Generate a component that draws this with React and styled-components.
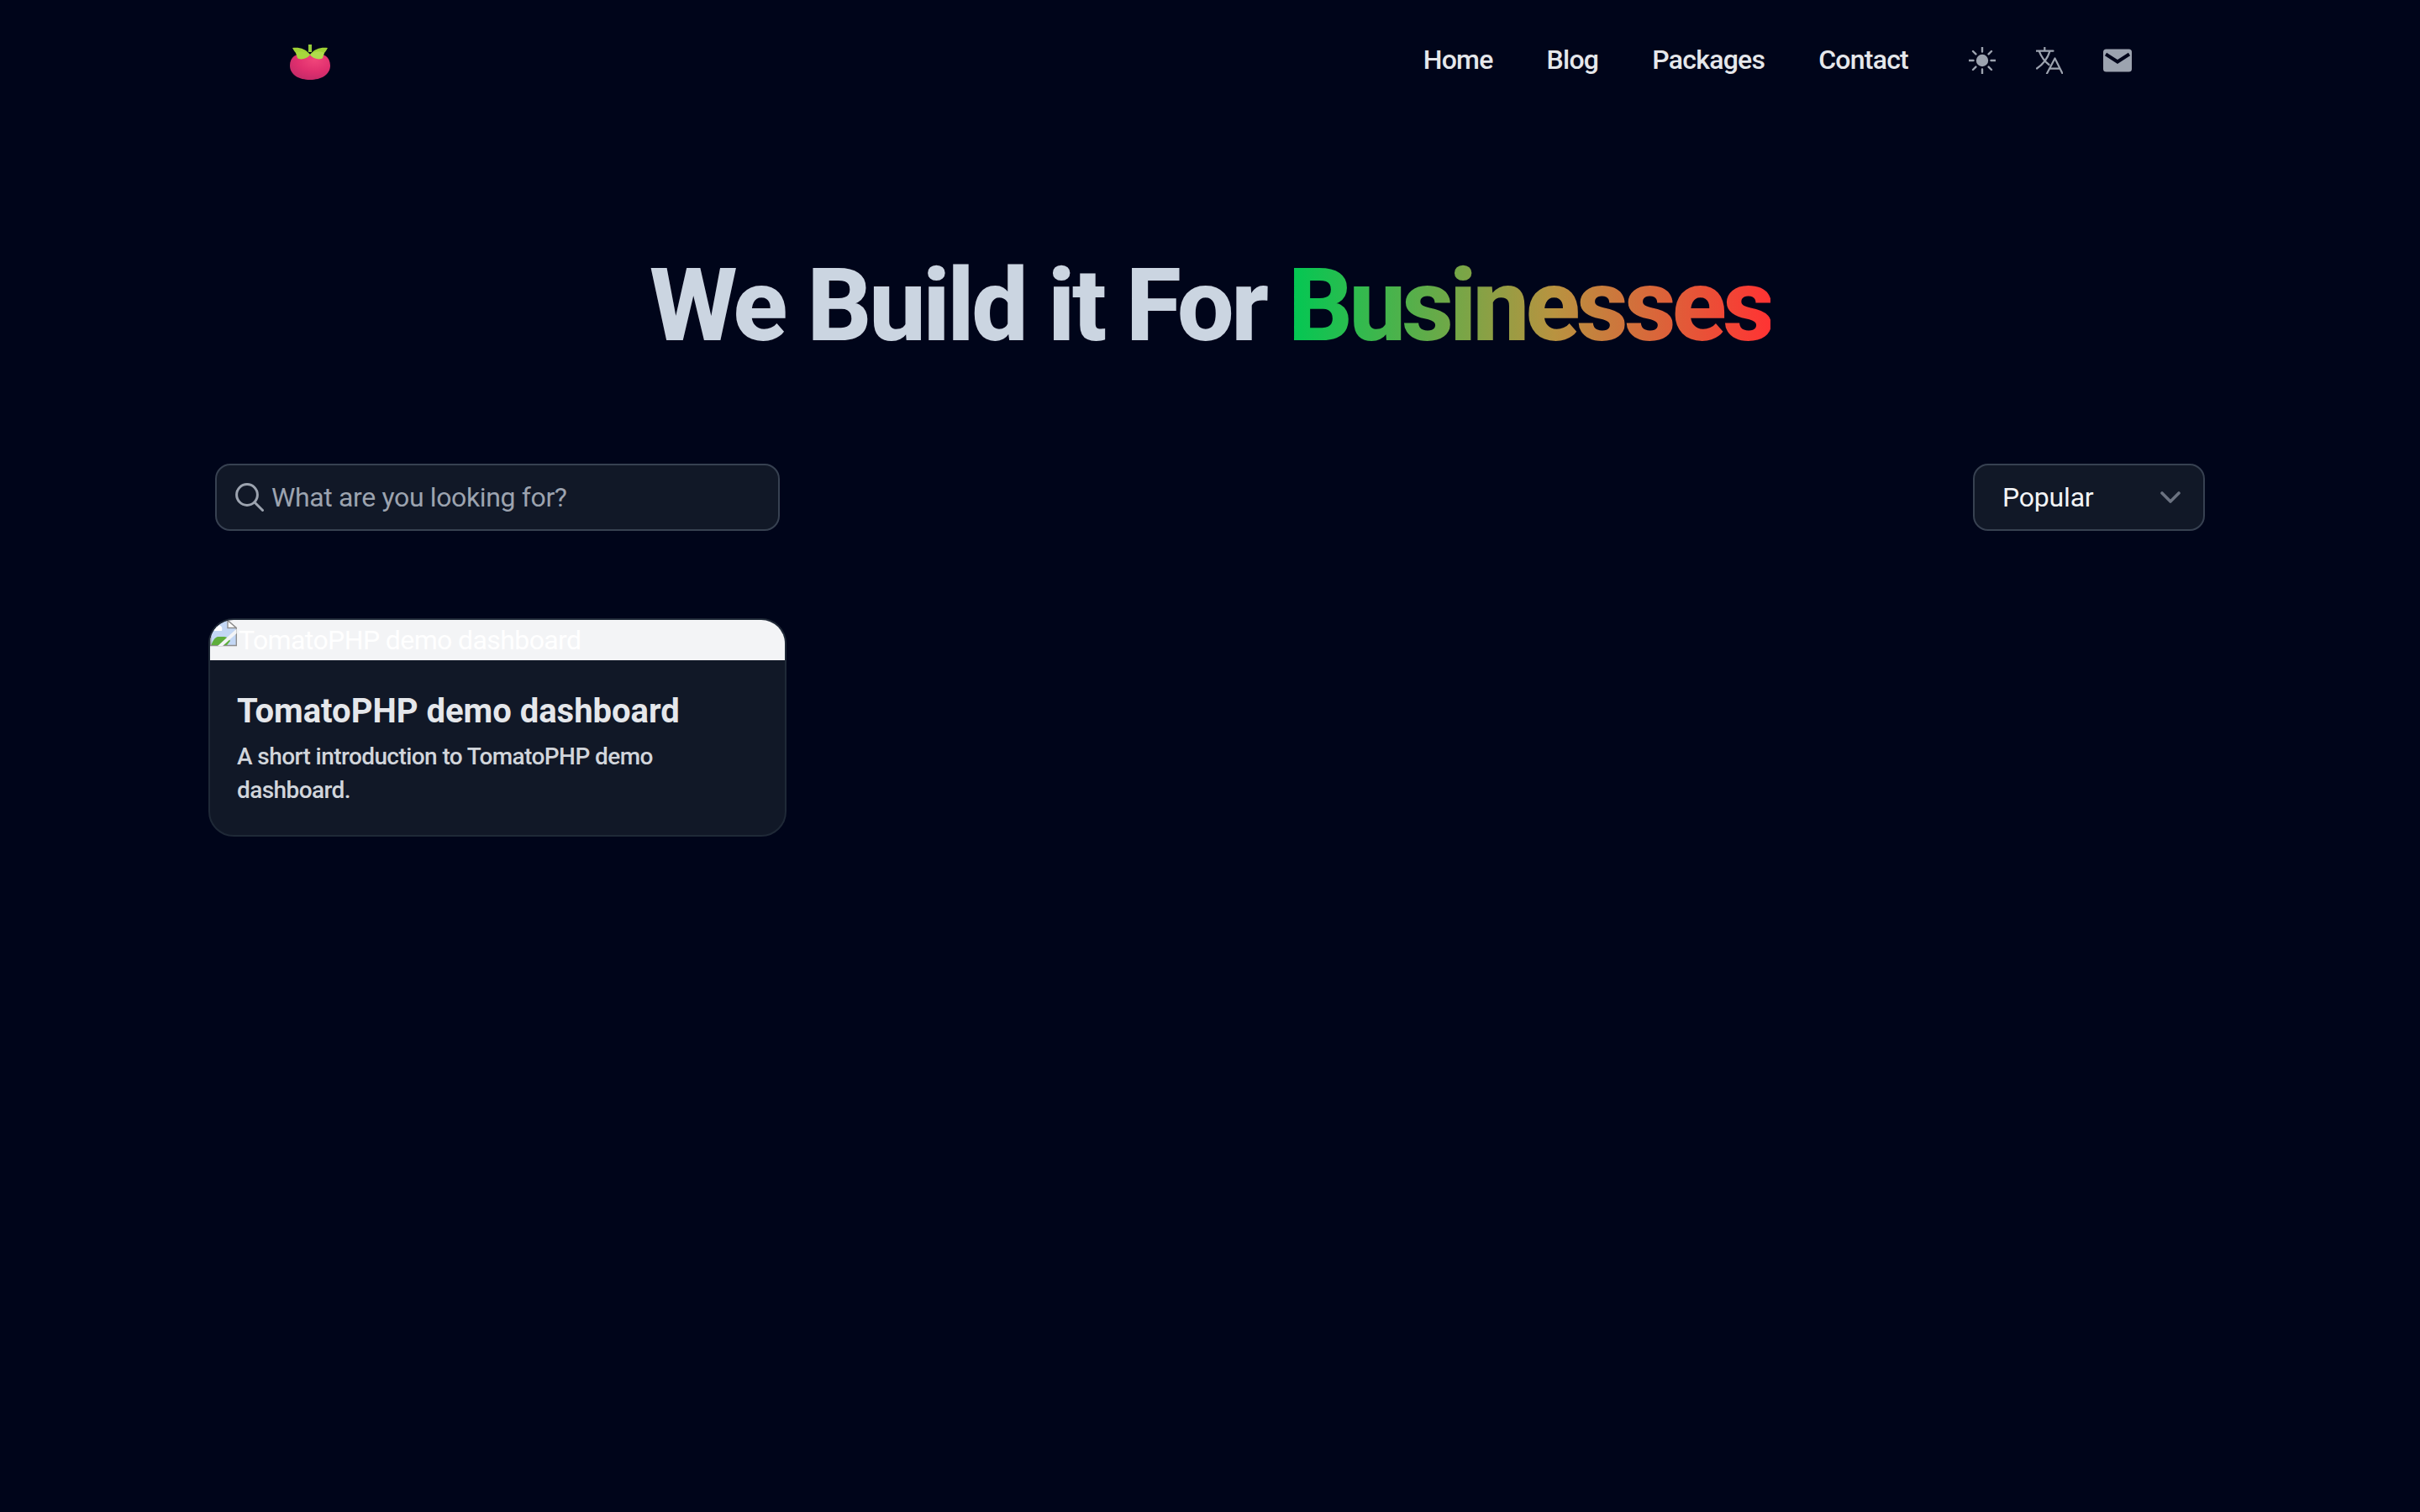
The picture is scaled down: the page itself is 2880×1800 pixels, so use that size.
import React from 'react';
import styled, { createGlobalStyle } from 'styled-components';

const GlobalStyle = createGlobalStyle`
    * { box-sizing: border-box; }
    html, body { margin: 0; padding: 0; background: #00051a; }
    body { font-family: "Roboto", "Noto Sans", "Liberation Sans", sans-serif; }
`

const Page = styled.div`
    min-height: 1800px;
    background-color: #00051a;
    color: #e5e7eb;
`

const Header = styled.header`
    height: 144px;
    padding: 0 343px 0 345px;
    display: flex;
    align-items: center;
    justify-content: space-between;
`

const LogoLink = styled.a`
    display: block;
    width: 48px; height: 42px;
    margin-top: 4px;
`

const HeaderRight = styled.div`
    display: flex;
    align-items: center;
    gap: 72px;
`

const Nav = styled.nav`
    display: flex;
    align-items: center;
    gap: 64px;
    margin-top: -2px;
`

const NavLink = styled.a`
    font-size: 32px; line-height: 48px;
    font-weight: 500;
    color: #e5e7eb;
    letter-spacing: -0.75px;
`

const IconRow = styled.div`
    display: flex;
    align-items: center;
    gap: 48px;
`

const IconButton = styled.button`
    display: block;
    width: ${(props) => props.$width || 32}px; height: 32px;
    padding: 0;
    border: 0;
    background: none;
    color: #9ca3af;

    svg { display: block; }
`

const Hero = styled.section`
    padding-top: 160px;
    padding-bottom: 128px;
    text-align: center;
`

const Title = styled.h1`
    margin: 0;
    font-size: 120px; line-height: 120px;
    font-weight: 800;
    letter-spacing: -3.4px;
    color: #cbd5e1;
`

const Gradient = styled.span`
    background: linear-gradient(to right, #00c853, #b89340 55%, #ff3333);
    -webkit-background-clip: text;
    background-clip: text;
    color: transparent;
    letter-spacing: -4.7px;
`

const Toolbar = styled.div`
    padding: 0 256px;
    display: flex;
    align-items: center;
    justify-content: space-between;
`

const SearchBox = styled.label`
    width: 672px; height: 80px;
    padding: 0 22px;
    display: flex;
    align-items: center;
    gap: 9px;
    background-color: #111827;
    border: 2px solid #374151;
    border-radius: 18px;
    color: #9ca3af;
`

const SearchInput = styled.input`
    flex: 1;
    min-width: 0;
    padding: 0;
    border: 0;
    outline: 0;
    background: none;
    font-family: inherit;
    font-size: 32px;
    letter-spacing: -0.36px;
    color: #f3f4f6;

    &::placeholder { color: #9ca3af; opacity: 1; }
`

const SortSelect = styled.div`
    width: 276px; height: 80px;
    padding: 0 27px 0 33px;
    display: flex;
    align-items: center;
    justify-content: space-between;
    background-color: #111827;
    border: 2px solid #374151;
    border-radius: 18px;
    font-size: 32px;
    letter-spacing: -0.2px;
    color: #f3f4f6;
`

const Grid = styled.div`
    padding: 104px 0 0 248px;
    display: grid;
    grid-template-columns: 688px;
`

const Card = styled.article`
    border: 2px solid #1f2937;
    border-radius: 30px;
    background-color: #111827;
    overflow: hidden;
`

const BrokenImage = styled.div`
    height: 48px;
    display: flex;
    align-items: flex-start;
    gap: 2px;
    background-color: #f3f4f6;
    font-size: 32px; line-height: 48px;
    color: #ffffff;
    letter-spacing: -0.6px;

    svg { display: block; flex: none; }
`

const CardBody = styled.div`
    padding: 33px 32px;
`

const CardTitle = styled.h3`
    margin: 0 0 6px;
    font-size: 40px; line-height: 56px;
    font-weight: 700;
    color: #e5e7eb;
`

const CardText = styled.p`
    margin: 0;
    width: 540px;
    font-size: 28px; line-height: 40px;
    font-weight: 500;
    letter-spacing: -0.58px;
    color: #d1d5db;
`

const Logo = () => (
    <svg width="48" height="42" viewBox="0 0 48 42">
        <defs>
            <radialGradient id="tomatoBody" cx="0.62" cy="0.25" r="0.8">
                <stop offset="0" stopColor="#f0457a" />
                <stop offset="0.55" stopColor="#e02f6e" />
                <stop offset="1" stopColor="#c42a68" />
            </radialGradient>
        </defs>
        <path d="M24 12C32 9 48 10 48 25C48 36 37 42 24 42C11 42 0 36 0 25C0 10 16 9 24 12Z" fill="url(#tomatoBody)" />
        <path d="M22 0H26V9H22Z" fill="#94cc3a" />
        <path d="M3 4C11 3 19 5 24 12C19 13 15 14 11 12C7 11 5 8 3 4Z" fill="#9fd236" />
        <path d="M45 4C37 3 29 5 24 12C29 13 33 14 37 12C41 11 43 8 45 4Z" fill="#9fd236" />
        <path d="M7 10C13 7 19 8 24 12C21 17 12 19 9 16Z" fill="#a6d83c" />
        <path d="M41 10C35 7 29 8 24 12C27 17 36 19 39 16Z" fill="#b0dc4c" />
    </svg>
)

const SunIcon = () => (
    <svg width="32" height="32" viewBox="0 0 32 32" fill="none" stroke="currentColor" strokeWidth="2.4" strokeLinecap="round">
        <circle cx="16" cy="16" r="7.2" fill="currentColor" stroke="none" />
        <path d="M16 0.5V5.5M16 26.5V31.5M0.5 16H5.5M26.5 16H31.5M5 5L8.4 8.4M23.6 23.6L27 27M5 27L8.4 23.6M23.6 8.4L27 5" />
    </svg>
)

const TranslateIcon = () => (
    <svg width="32" height="32" viewBox="0 0 32 32" fill="none" stroke="currentColor" strokeWidth="2.2" strokeLinecap="round" strokeLinejoin="round">
        <path d="M10.3 0.5V4.7M0.5 4.7H20.5M3.6 4.7C6 11 10 17 15.5 21M16.6 4.7C14 13 8 21 1 25.5" />
        <path d="M13 31.5L22.5 13.5L31.5 31.5M16.2 25.7H28.5" />
    </svg>
)

const MailIcon = () => (
    <svg width="34" height="32" viewBox="0 0 34 32">
        <rect x="0" y="2.5" width="34" height="27" rx="3.5" fill="currentColor" />
        <path d="M3 8.5L17 17.5L31 8.5" fill="none" stroke="#00051a" strokeWidth="4" />
    </svg>
)

const SearchIcon = () => (
    <svg width="34" height="34" viewBox="0 0 34 34" fill="none" stroke="currentColor" strokeWidth="3" strokeLinecap="round" style={{ flex: 'none' }}>
        <circle cx="14" cy="14" r="12.4" />
        <path d="M23 23L32.5 32.5" />
    </svg>
)

const ChevronIcon = () => (
    <svg width="24" height="14" viewBox="0 0 24 14" fill="none" stroke="#6b7280" strokeWidth="3.6" strokeLinecap="round" strokeLinejoin="round">
        <path d="M2 2L12 12L22 2" />
    </svg>
)

// chrome's broken image placeholder
const BrokenImageIcon = () => (
    <svg width="32" height="32" viewBox="0 0 32 32">
        <path d="M0.7 0.7H21L31.3 9.5V30.5H0.7Z" fill="#c3d7f5" stroke="#8f8f8f" strokeWidth="1.4" />
        <path d="M21 0.7V9.5H31.3Z" fill="#ffffff" stroke="#8f8f8f" strokeWidth="1.4" />
        <path d="M1.4 5C4 3.5 9 4 11 6.5C14 7 15 10 14 13H1.4Z" fill="#ffffff" />
        <path d="M1.4 30C3 25 6 20 10 20H17C20 20 23 23 24 25L20 30Z" fill="#5fae3c" />
        <path d="M9 31L15 31L31.6 16V10.5Z" fill="#f3f4f6" />
    </svg>
)

const App = () => {
    return (
        <Page>
            <GlobalStyle />
            <Header>
                <LogoLink><Logo /></LogoLink>
                <HeaderRight>
                    <Nav>
                        <NavLink>Home</NavLink>
                        <NavLink>Blog</NavLink>
                        <NavLink>Packages</NavLink>
                        <NavLink>Contact</NavLink>
                    </Nav>
                    <IconRow>
                        <IconButton><SunIcon /></IconButton>
                        <IconButton><TranslateIcon /></IconButton>
                        <IconButton $width={34}><MailIcon /></IconButton>
                    </IconRow>
                </HeaderRight>
            </Header>
            <Hero>
                <Title>We Build it For <Gradient>Businesses</Gradient></Title>
            </Hero>
            <Toolbar>
                <SearchBox>
                    <SearchIcon />
                    <SearchInput placeholder="What are you looking for?" />
                </SearchBox>
                <SortSelect>
                    Popular
                    <ChevronIcon />
                </SortSelect>
            </Toolbar>
            <Grid>
                <Card>
                    <BrokenImage>
                        <BrokenImageIcon />
                        TomatoPHP demo dashboard
                    </BrokenImage>
                    <CardBody>
                        <CardTitle>TomatoPHP demo dashboard</CardTitle>
                        <CardText>A short introduction to TomatoPHP demo dashboard.</CardText>
                    </CardBody>
                </Card>
            </Grid>
        </Page>
    );
}

export default App;
